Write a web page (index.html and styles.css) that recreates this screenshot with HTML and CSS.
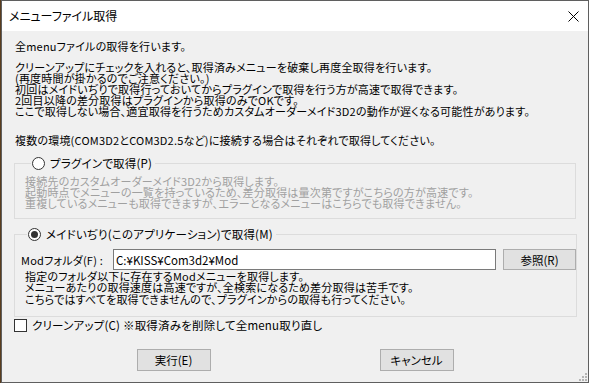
FILE: index.html
```html
<!DOCTYPE html>
<html lang="ja">
<head>
    <meta charset="UTF-8">
    <meta name="viewport" content="width=device-width, initial-scale=1.0">
    <title>メニューファイル取得</title>
    <link rel="stylesheet" href="styles.css">
</head>
<body>
    <div class="window">
        <div class="titlebar">
            <span class="title">メニューファイル取得</span>
            <svg class="close" width="11" height="11" viewBox="0 0 11 11">
                <path d="M0.5 0.5 L10.5 10.5 M10.5 0.5 L0.5 10.5" stroke="#000" stroke-width="1"/>
            </svg>
        </div>
        <div class="content">
            <p class="intro">全menuファイルの取得を行います。</p>
            <p class="notes">
                クリーンアップにチェックを入れると、取得済みメニューを破棄し再度全取得を行います。<br>
                (再度時間が掛かるのでご注意ください。)<br>
                初回はメイドいぢりで取得行っておいてからプラグインで取得を行う方が高速で取得できます。<br>
                2回目以降の差分取得はプラグインから取得のみでOKです。<br>
                ここで取得しない場合、適宜取得を行うためカスタムオーダーメイド3D2の動作が遅くなる可能性があります。
            </p>
            <p class="multi">複数の環境(COM3D2とCOM3D2.5など)に接続する場合はそれぞれで取得してください。</p>

            <fieldset class="group group-plugin">
                <legend><span class="radio"></span>プラグインで取得(P)</legend>
                <p class="desc disabled">
                    接続先のカスタムオーダーメイド3D2から取得します。<br>
                    起動時点でメニューの一覧を持っているため、差分取得は量次第ですがこちらの方が高速です。<br>
                    重複しているメニューも取得できますが、エラーとなるメニューはこちらでも取得できません。
                </p>
            </fieldset>

            <fieldset class="group group-maid">
                <legend><span class="radio checked"></span>メイドいぢり(このアプリケーション)で取得(M)</legend>
                <div class="folder-row">
                    <label class="folder-label" for="modFolder">Modフォルダ(F) :</label>
                    <input type="text" id="modFolder" class="folder-input" value="C:¥KISS¥Com3d2¥Mod">
                    <button class="btn browse">参照(R)</button>
                </div>
                <p class="desc">
                    指定のフォルダ以下に存在するModメニューを取得します。<br>
                    メニューあたりの取得速度は高速ですが、全検索になるため差分取得は苦手です。<br>
                    こちらではすべてを取得できませんので、プラグインからの取得も行ってください。
                </p>
            </fieldset>

            <div class="cleanup">
                <span class="checkbox"></span>
                <span>クリーンアップ(C) ※取得済みを削除して全menu取り直し</span>
            </div>

            <div class="actions">
                <button class="btn">実行(E)</button>
                <button class="btn">キャンセル</button>
            </div>
        </div>
        <svg class="grip" width="9" height="9" viewBox="0 0 9 9">
            <rect x="7" y="1" width="2" height="2" fill="#b4b4b4"/>
            <rect x="4" y="4" width="2" height="2" fill="#b4b4b4"/>
            <rect x="7" y="4" width="2" height="2" fill="#b4b4b4"/>
            <rect x="1" y="7" width="2" height="2" fill="#b4b4b4"/>
            <rect x="4" y="7" width="2" height="2" fill="#b4b4b4"/>
            <rect x="7" y="7" width="2" height="2" fill="#b4b4b4"/>
        </svg>
    </div>
</body>
</html>
```

FILE: styles.css
```css
body {
    margin: 0;
    background-color: #5a3d1e;
    font-family: "Noto Sans CJK JP", sans-serif;
    font-size: 11px;
    letter-spacing: 0.2px;
    font-feature-settings: "palt";
    color: #000;
}
.window {
    position: relative;
    margin-left: 1px;
    width: 586px;
    height: 381px;
    border: 1px solid #5f5f5f;
    background-color: #f0f0f0;
}
.titlebar {
    height: 30px;
    background-color: #fff;
    display: flex;
    align-items: center;
    justify-content: space-between;
    padding: 0 9px 0 7px;
}
.title {
    font-size: 12px;
    line-height: 14px;
    letter-spacing: 0;
}
.close {
    display: block;
}
.content {
    padding: 0 12px;
}
.content p {
    margin: 0;
}
.intro {
    margin-top: 10px !important;
    padding-left: 1px;
    line-height: 11px;
}
.notes {
    margin-top: 10px !important;
    padding-left: 1px;
    line-height: 11px;
}
.multi {
    margin-top: 18px !important;
    padding-left: 1px;
    line-height: 11px;
}
.group {
    margin: 0;
    padding: 0 0 0 10px;
    border: 1px solid #dcdcdc;
}
.group legend {
    display: flex;
    align-items: center;
    gap: 5px;
    margin-left: 6px;
    padding: 0 3px 0 1px;
    height: 14px;
    line-height: 14px;
    font-size: 11.5px;
}
.group-plugin {
    margin-top: 10px;
    padding-bottom: 9px;
}
.group-maid {
    margin-top: 8px;
    padding-left: 6px;
    padding-bottom: 11px;
}
.radio {
    display: inline-block;
    position: relative;
    width: 11px;
    height: 11px;
    border: 1px solid #333;
    border-radius: 50%;
    background-color: #fff;
}
.radio.checked::after {
    content: "";
    position: absolute;
    left: 2px;
    top: 2px;
    width: 7px;
    height: 7px;
    border-radius: 50%;
    background-color: #333;
}
.desc {
    line-height: 11px;
    padding-top: 6px;
}
.group-maid .desc {
    line-height: 11.3px;
    padding-top: 1px;
    padding-left: 4px;
}
.disabled {
    color: #a0a0a0;
}
.folder-row {
    display: flex;
    align-items: center;
    margin-top: 8px;
    height: 21px;
}
.folder-label {
    width: 92px;
}
.folder-input {
    box-sizing: border-box;
    width: 383px;
    height: 21px;
    margin: 0;
    padding: 0 2px;
    border: 1px solid #7a7a7a;
    background-color: #fff;
    font-family: inherit;
    font-size: 11.5px;
    font-feature-settings: "palt";
    outline: none;
}
.btn {
    box-sizing: border-box;
    width: 74px;
    height: 22px;
    margin: 0;
    padding: 0;
    border: 1px solid #adadad;
    background-color: #e1e1e1;
    font-family: inherit;
    font-size: 11.5px;
    font-feature-settings: "palt";
    color: #000;
}
.browse {
    width: 73px;
    height: 21px;
    margin-left: 7px;
}
.cleanup {
    display: flex;
    align-items: center;
    gap: 5px;
    margin-top: 2px;
    height: 13px;
    font-size: 11.5px;
}
.checkbox {
    display: inline-block;
    width: 11px;
    height: 11px;
    border: 1px solid #333;
    background-color: #fff;
}
.actions {
    display: flex;
    justify-content: center;
    gap: 169px;
    margin-top: 17px;
}
.grip {
    position: absolute;
    right: 1px;
    bottom: 1px;
}
```
